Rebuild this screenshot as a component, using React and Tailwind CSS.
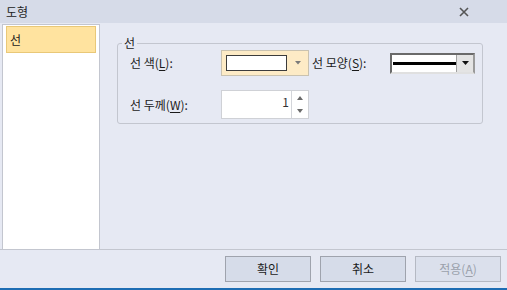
import React from "react";

const font = { fontFamily: '"Noto Sans CJK KR", "Noto Sans", sans-serif' };

function U({ children }) {
  return <span className="underline underline-offset-2">{children}</span>;
}

export default function App() {
  return (
    <div
      className="w-[507px] h-[290px] flex flex-col bg-[#e6e9f3] text-[12px] text-[#1a1a1a] overflow-hidden"
      style={font}
    >
      {/* Title bar */}
      <div className="h-[23px] bg-[#d6dbe8] flex items-center justify-between pl-[6px] pr-[38px]">
        <span className="text-[12px] leading-none text-[#222]">도형</span>
        <svg width="10" height="10" viewBox="0 0 10 10">
          <path d="M1 1 L9 9 M9 1 L1 9" stroke="#555" strokeWidth="1.6" />
        </svg>
      </div>

      {/* Main */}
      <div className="flex-1 flex">
        <div className="ml-[2px] mt-[1px] w-[98px] bg-white border-l border-t border-r border-[#c3c6cf] pl-[3px] pt-[1px]">
          <div className="w-[90px] h-[27px] bg-[#ffe39f] border border-[#e9c878] flex items-center pl-[3px] text-[12px]">
            선
          </div>
        </div>

        <div className="flex-1 pl-[17px] pt-[20px]">
          <div className="relative w-[366px] h-[81px] border border-[#c3c6cf] rounded-[3px] pl-[12px] pt-[6px]">
            <span className="absolute left-[4px] top-[-9px] px-[2px] bg-[#e6e9f3] leading-[16px]">선</span>

            <div className="flex items-center h-[26px]">
              <span className="w-[91px]">
                선 색(<U>L</U>):
              </span>
              <div className="w-[88px] h-[26px] bg-[#fdebc6] border border-[#c9c2b0] flex items-center pl-[4px]">
                <div className="w-[61px] h-[16px] bg-white border border-[#3c3c3c]" />
                <div className="flex-1 flex justify-center">
                  <svg width="6" height="4" viewBox="0 0 6 4">
                    <path d="M0 0 H6 L3 3.5 Z" fill="#7a7a7a" />
                  </svg>
                </div>
              </div>
              <span className="ml-[3px] w-[78px]">
                선 모양(<U>S</U>):
              </span>
              <div className="w-[85px] h-[21px] bg-white border-2 border-t-[#6a6a6a] border-l-[#6a6a6a] border-r-[#9a9a9a] border-b-[#e0e0e0] flex items-center">
                <div className="ml-[1px] w-[63px] h-[3px] bg-black" />
                <div className="ml-auto w-[17px] h-full bg-[#e4e4e4] border-l border-[#a0a0a0] flex items-center justify-center">
                  <svg width="7" height="4" viewBox="0 0 7 4">
                    <path d="M0 0 H7 L3.5 4 Z" fill="#111" />
                  </svg>
                </div>
              </div>
            </div>

            <div className="flex items-center h-[29px] mt-[14px]">
              <span className="w-[91px]">
                선 두께(<U>W</U>):
              </span>
              <div className="w-[88px] h-[29px] bg-white border border-[#cfd1d6] flex">
                <div className="w-[69px] flex justify-end items-start pr-[2px] pt-[3px] leading-[16px] text-[#333]">1</div>
                <div className="flex-1 border-l border-[#d3d5da] flex flex-col items-center justify-between py-[5px]">
                  <svg width="6" height="4" viewBox="0 0 6 4">
                    <path d="M3 0 L6 4 H0 Z" fill="#6a6a6a" />
                  </svg>
                  <svg width="6" height="4" viewBox="0 0 6 4">
                    <path d="M0 0 H6 L3 4 Z" fill="#6a6a6a" />
                  </svg>
                </div>
              </div>
            </div>
          </div>
        </div>
      </div>

      {/* Footer */}
      <div className="h-[39px] border-t border-[#c3c6cf] flex justify-end items-start gap-[9px] pr-[6px] pt-[6px]">
        <button className="w-[86px] h-[26px] bg-[#d6dce9] border border-[#9fa3ad] text-[12px] text-[#1a1a1a]">확인</button>
        <button className="w-[86px] h-[26px] bg-[#d6dce9] border border-[#9fa3ad] text-[12px] text-[#1a1a1a]">취소</button>
        <button className="w-[86px] h-[26px] bg-[#dbe0ec] border border-[#b5b9c3] text-[12px] text-[#9aa0ab]">
          적용(<U>A</U>)
        </button>
      </div>
      <div className="h-[2px] bg-[#1e6db3]" />
    </div>
  );
}
